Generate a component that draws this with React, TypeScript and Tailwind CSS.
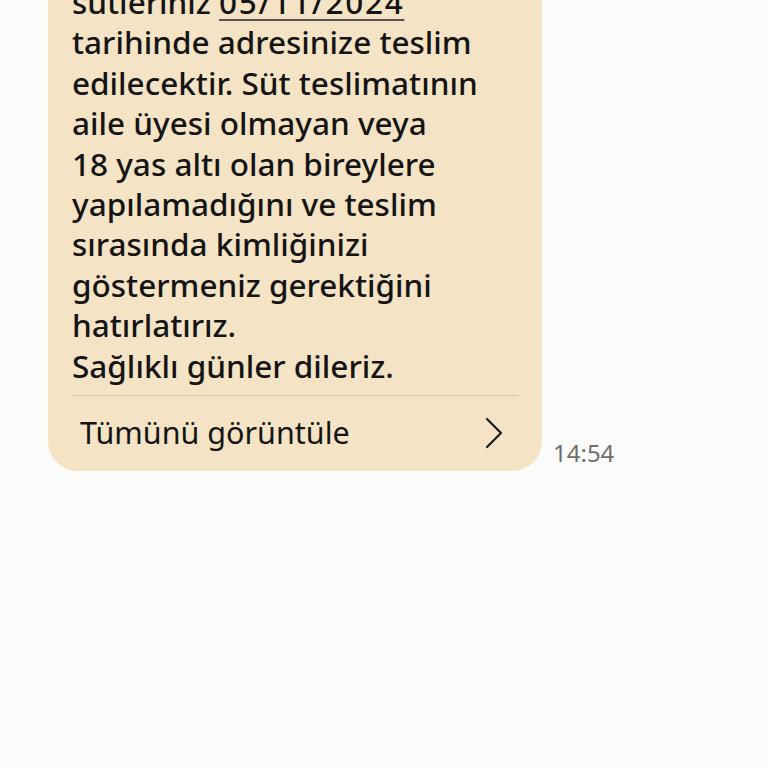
export default function App() {
  return (
    <div className="h-[768px] w-[768px] overflow-hidden bg-[#fbfbf9] font-['Noto_Sans',sans-serif]">
      <div className="flex items-end gap-[11px] pl-[48px] -mt-[40px]">
        <div className="w-[494px] rounded-b-[30px] bg-[#f4e3c5] pl-[24px] pr-[23px] pt-[22px]">
          <p className="text-[31.5px] font-medium leading-[40.4px] text-[#141414]">
            sütleriniz{" "}
            <span className="tracking-[1.7px] underline decoration-[2px] decoration-[#555] underline-offset-[5px]">05/11/2024</span>
            <br />
            tarihinde adresinize teslim
            <br />
            edilecektir. Süt teslimatının
            <br />
            aile üyesi olmayan veya
            <br />
            18 yas altı olan bireylere
            <br />
            yapılamadığını ve teslim
            <br />
            sırasında kimliğinizi
            <br />
            göstermeniz gerektiğini
            <br />
            hatırlatırız.
            <br />
            Sağlıklı günler dileriz.
          </p>
          <div className="mt-[9px] h-px bg-[#d9c8a9]" />
          <div className="flex h-[75px] items-center justify-between pl-[8px] pr-[16px] pb-[2px]">
            <span className="text-[30.5px] text-[#141414]">Tümünü görüntüle</span>
            <svg width="18" height="32" viewBox="0 0 18 32" fill="none" stroke="#1a1a1a" strokeWidth="2.2" strokeLinecap="round" strokeLinejoin="round">
              <path d="M2 2 L16 16 L2 30" />
            </svg>
          </div>
        </div>
        <span className="mb-[2px] text-[24px] leading-[32px] text-[#6e6e6e]">14:54</span>
      </div>
    </div>
  );
}
